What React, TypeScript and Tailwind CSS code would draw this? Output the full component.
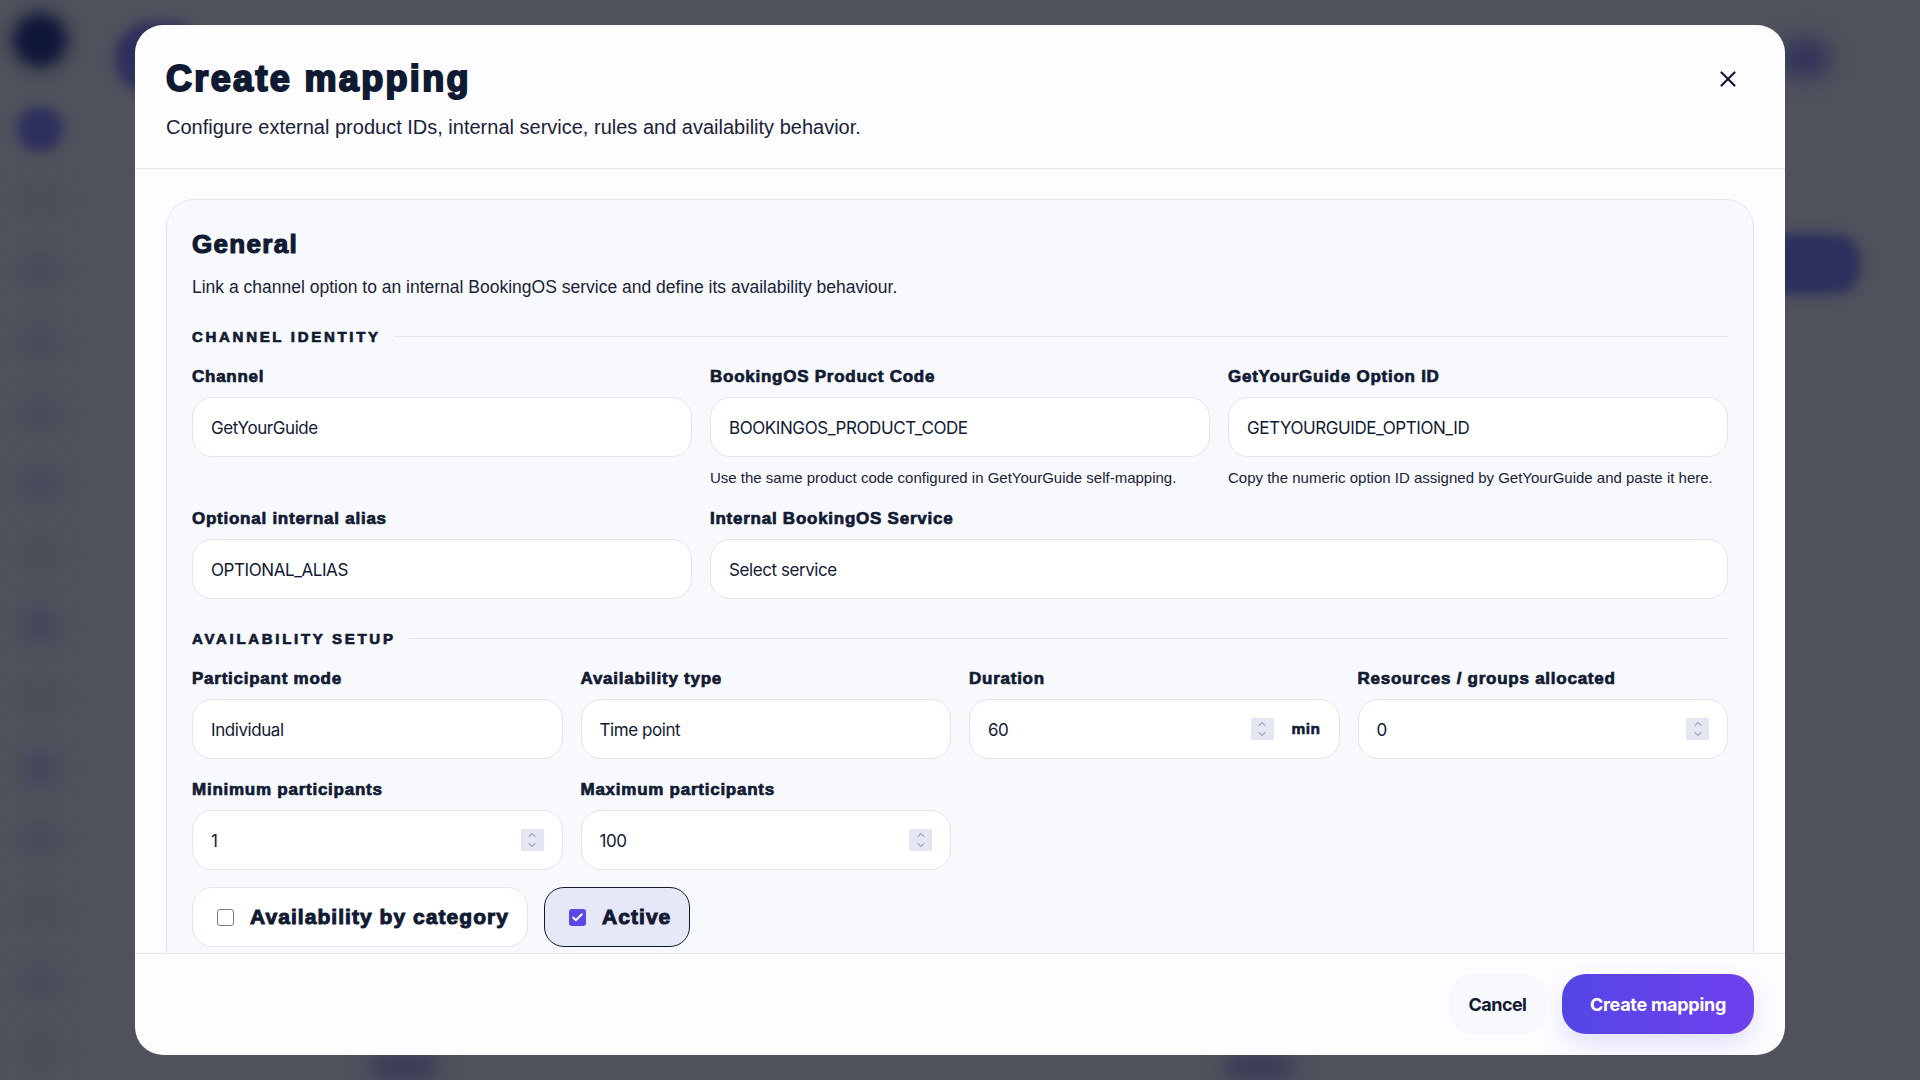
import { X, ChevronUp, ChevronDown, Check } from 'lucide-react';
import type { ReactNode } from 'react';

const heavy = "font-['Liberation_Sans',sans-serif] font-bold text-[#111a33]";
const valueFont = "font-['Inter',sans-serif] text-[#111a33] text-[17px] tracking-[-0.025em]";

function Spin() {
  return (
    <span className="flex h-[22px] w-[23px] flex-col items-center justify-center bg-[#e4e6f1] text-[#74788c]">
      <ChevronUp size={12} strokeWidth={2} className="-mb-px" />
      <ChevronDown size={12} strokeWidth={2} className="-mt-px" />
    </span>
  );
}

function Field({ label, value, help, spin, unit }: { label: string; value: string; help?: string; spin?: boolean; unit?: string }) {
  return (
    <div className="min-w-0">
      <div className={`${heavy} mb-[10px] h-[21px] text-[17px] leading-[21px] tracking-[0.044em] [-webkit-text-stroke:0.7px_#111a33]`}>{label}</div>
      <div className="flex h-[60px] items-center rounded-[20px] border border-[#e2e4f0] bg-white pl-[18px] pr-[18px]">
        <span className={`${valueFont} flex-1 pt-[3px]`}>{value}</span>
        {spin && <Spin />}
        {unit && <span className={`${heavy} ml-[18px] text-[15.5px] tracking-[0.03em] [-webkit-text-stroke:0.6px_#111a33]`}>{unit}</span>}
      </div>
      {help && <p className="mt-[12px] font-['Liberation_Sans',sans-serif] text-[15px] leading-[18px] text-[#1a2238]">{help}</p>}
    </div>
  );
}

function SectionTitle({ children }: { children: ReactNode }) {
  return (
    <div className="flex h-[20px] items-center gap-[13px]">
      <span className={`${heavy} pt-[2px] text-[15px] tracking-[0.18em] [-webkit-text-stroke:0.7px_#111a33]`}>{children}</span>
      <span className="h-px flex-1 bg-[#e2e4f0]" />
    </div>
  );
}

function Backdrop() {
  const items = ['bg-[#494c56]', 'bg-[#474a58]', 'bg-[#474a58]', 'bg-[#474a58]', 'bg-[#45485a]', 'bg-[#494c56]', 'bg-[#42455c]', 'bg-[#494c56]', 'bg-[#42455c]', 'bg-[#474a58]', 'bg-[#494c56]', 'bg-[#474a58]', 'bg-[#494c56]'];
  return (
    <div className="flex h-full w-full">
      <aside className="flex w-[80px] shrink-0 flex-col items-center pt-[12px]">
        <div className="h-[56px] w-[56px] rounded-full bg-[#0f1738] blur-[8px]" />
        <div className="mt-[38px] h-[46px] w-[46px] rounded-full bg-[#2e2f5c] blur-[6px]" />
        <div className="mt-[34px] flex flex-col gap-[43px]">
          {items.map((c, i) => (
            <div key={i} className={`h-[28px] w-[34px] rounded-lg blur-[10px] ${c}`} />
          ))}
        </div>
      </aside>
      <main className="flex min-w-0 flex-1 flex-col pl-[35px] pr-[60px] pt-[22px]">
        <div className="flex h-[72px] items-center justify-between">
          <div className="h-[72px] w-[90px] rounded-full bg-[#2e2f5c] blur-[6px]" />
          <div className="mr-[30px] h-[40px] w-[50px] rounded-full bg-[#33345a] blur-[10px]" />
        </div>
        <div className="mt-[140px] flex justify-end">
          <div className="h-[60px] w-[200px] rounded-[24px] bg-[#2e2f5c] blur-[6px]" />
        </div>
        <div className="mt-auto flex gap-[785px] pl-[254px]">
          <div className="h-[26px] w-[70px] rounded-full bg-[#3a3c58] blur-[9px]" />
          <div className="h-[26px] w-[70px] rounded-full bg-[#3a3c58] blur-[9px]" />
        </div>
      </main>
    </div>
  );
}

function Toggle({ label, checked }: { label: string; checked?: boolean }) {
  return (
    <div className={`flex h-[60px] items-center gap-[16px] rounded-[20px] border pl-[24px] pr-[18px] ${checked ? 'border-[#111a33] bg-[#e7e8f7]' : 'border-[#e2e4f0] bg-white'}`}>
      {checked ? (
        <span className="flex h-[17px] w-[17px] items-center justify-center rounded-[3px] bg-[#5b46e8] text-white">
          <Check size={13} strokeWidth={3.5} />
        </span>
      ) : (
        <span className="h-[17px] w-[17px] rounded-[3px] border border-[#77798a] bg-white" />
      )}
      <span className={`${heavy} text-[21px] tracking-[0.05em] [-webkit-text-stroke:1px_#111a33]`}>{label}</span>
    </div>
  );
}

export default function App() {
  return (
    <div className="relative h-screen w-full overflow-hidden bg-[#4f525c]">
      <Backdrop />
      <div className="absolute inset-0 flex justify-center pt-[25px]">
        <div className="flex h-[1030px] w-[1650px] flex-col overflow-hidden rounded-[28px] bg-[#fdfdff]">
          <header className="flex h-[144px] shrink-0 items-start justify-between border-b border-[#e5e6ec] pl-[31px] pr-[44px] pt-[31px]">
            <div>
              <h2 className={`${heavy} text-[36px] leading-[46px] tracking-[0.065em] [-webkit-text-stroke:2px_#111a33]`}>Create mapping</h2>
              <p className="mt-[12px] font-['Liberation_Sans',sans-serif] text-[20px] leading-[26px] text-[#1a2238]">Configure external product IDs, internal service, rules and availability behavior.</p>
            </div>
            <X size={26} strokeWidth={2} className="mt-[10px] text-[#111a33]" />
          </header>

          <div className="min-h-0 flex-1 overflow-hidden px-[31px] pt-[30px]">
            <section className="rounded-[28px] border border-[#e2e4f0] bg-[#f8f9fc] px-[25px] pb-[26px] pt-[26px]">
              <h3 className={`${heavy} text-[26px] leading-[36px] tracking-[0.05em] [-webkit-text-stroke:1.2px_#111a33]`}>General</h3>
              <p className="mt-[13px] font-['Liberation_Sans',sans-serif] text-[17.5px] leading-[24px] text-[#1a2238]">Link a channel option to an internal BookingOS service and define its availability behaviour.</p>

              <div className="mt-[27px]">
                <SectionTitle>CHANNEL IDENTITY</SectionTitle>
              </div>
              <div className="mt-[20px] grid grid-cols-3 gap-x-[18px]">
                <Field label="Channel" value="GetYourGuide" />
                <Field label="BookingOS Product Code" value="BOOKINGOS_PRODUCT_CODE" help="Use the same product code configured in GetYourGuide self-mapping." />
                <Field label="GetYourGuide Option ID" value="GETYOURGUIDE_OPTION_ID" help="Copy the numeric option ID assigned by GetYourGuide and paste it here." />
              </div>
              <div className="mt-[21px] grid grid-cols-3 gap-x-[18px]">
                <Field label="Optional internal alias" value="OPTIONAL_ALIAS" />
                <div className="col-span-2">
                  <Field label="Internal BookingOS Service" value="Select service" />
                </div>
              </div>

              <div className="mt-[29px]">
                <SectionTitle>AVAILABILITY SETUP</SectionTitle>
              </div>
              <div className="mt-[20px] grid grid-cols-4 gap-x-[18px] gap-y-[20px]">
                <Field label="Participant mode" value="Individual" />
                <Field label="Availability type" value="Time point" />
                <Field label="Duration" value="60" spin unit="min" />
                <Field label="Resources / groups allocated" value="0" spin />
                <Field label="Minimum participants" value="1" spin />
                <Field label="Maximum participants" value="100" spin />
              </div>
              <div className="mt-[17px] flex gap-[16px]">
                <Toggle label="Availability by category" />
                <Toggle label="Active" checked />
              </div>
            </section>
          </div>

          <footer className="flex h-[102px] shrink-0 items-start justify-end gap-[16px] border-t border-[#e5e6ec] pr-[31px] pt-[20px]">
            <button className="h-[60px] w-[97px] rounded-[24px] bg-[#f8f9fc] font-['Inter',sans-serif] text-[18px] font-bold tracking-[-0.03em] text-[#111a33]">Cancel</button>
            <button className="h-[60px] w-[192px] rounded-[24px] bg-gradient-to-r from-[#5346e6] to-[#7040ee] font-['Inter',sans-serif] text-[18px] font-bold tracking-[-0.015em] text-white shadow-[0_10px_24px_rgba(83,70,230,0.16)]">Create mapping</button>
          </footer>
        </div>
      </div>
    </div>
  );
}
